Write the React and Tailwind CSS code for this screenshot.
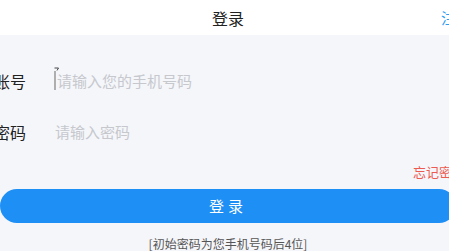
import React from "react";

export default function App() {
  return (
    <div
      className="w-[449px] h-[251px] overflow-hidden bg-[#f5f6fa]"
      style={{ fontFamily: '"Noto Sans CJK SC", "Noto Sans", sans-serif' }}
    >
      <div className="ml-[-6px] w-[468px]">
        {/* 顶部导航 */}
        <div className="relative h-[35px] bg-white flex items-center justify-center">
          <span className="text-[16px] text-[#222]">登录</span>
          <span className="absolute left-[447px] top-[9px] text-[15px] leading-[17px] text-[#2a9df4] whitespace-nowrap">
            注册
          </span>
        </div>

        {/* 账号 */}
        <div className="mt-[21px] h-[50px] flex items-center">
          <span className="w-[60px] shrink-0 text-[16px] text-[#222]">账号</span>
          <span className="shrink-0 mt-[-4px] w-[3px]">
            <svg width="3" height="24" viewBox="0 0 3 24" className="block overflow-visible">
              <path d="M0.5 1 H4.5 L3 3.5" stroke="#333" strokeWidth="0.9" fill="none" />
              <path d="M1 4 V23" stroke="#888" strokeWidth="1.3" />
            </svg>
          </span>
          <span className="text-[15px] text-[#c6c8cd]">请输入您的手机号码</span>
        </div>

        {/* 密码 */}
        <div className="h-[52px] flex items-center">
          <span className="w-[61px] shrink-0 text-[16px] text-[#222]">密码</span>
          <span className="text-[15px] text-[#c6c8cd]">请输入密码</span>
        </div>

        <div className="mt-[4px] h-[20px] pl-[419px] whitespace-nowrap text-[13px] leading-[20px] text-[#ec5a50]">
          忘记密码
        </div>

        <div className="mt-[7px] px-[6px]">
          <button className="w-full h-[34px] rounded-full bg-[#1e8ff5] text-white text-[15px] tracking-[4px]">
            登录
          </button>
        </div>

        <div className="mt-[12px] text-center text-[12px] leading-[18px] text-[#555]">
          [初始密码为您手机号码后4位]
        </div>
      </div>
    </div>
  );
}
